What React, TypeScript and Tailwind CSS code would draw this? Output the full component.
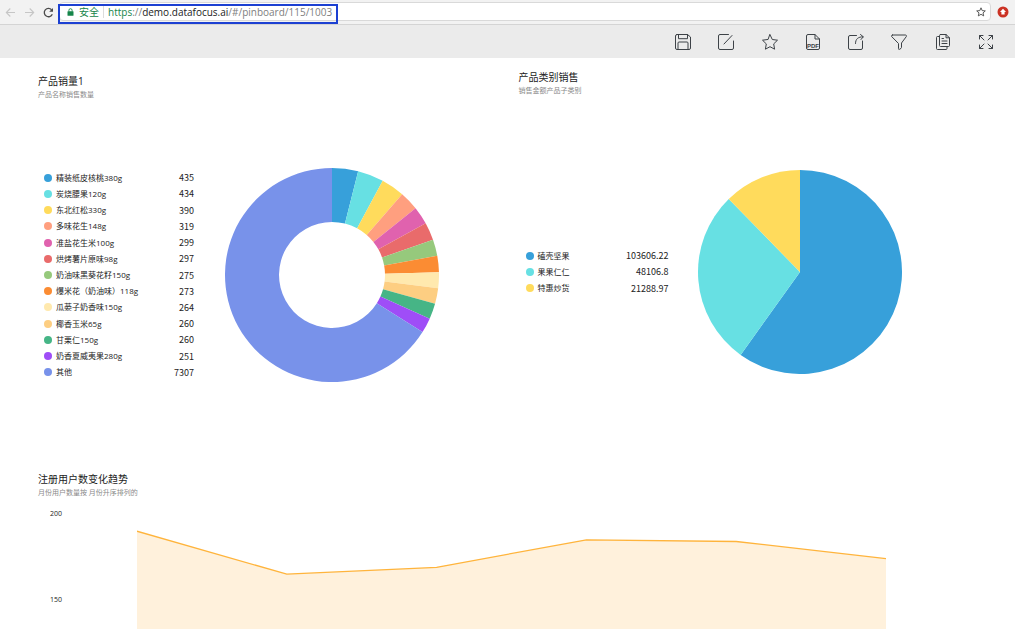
import type { ReactNode } from 'react';

interface Item {
  name: string;
  value: number;
  color: string;
}

const products: Item[] = [
  { name: '精装纸皮核桃380g', value: 435, color: '#37a0da' },
  { name: '炭烧腰果120g', value: 434, color: '#67e0e3' },
  { name: '东北红松330g', value: 390, color: '#ffdb5c' },
  { name: '多味花生148g', value: 319, color: '#ff9f7f' },
  { name: '淮盐花生米100g', value: 299, color: '#e062ae' },
  { name: '烘烤薯片原味98g', value: 297, color: '#e96b6b' },
  { name: '奶油味黑葵花籽150g', value: 275, color: '#96c97c' },
  { name: '爆米花（奶油味）118g', value: 273, color: '#fb8c33' },
  { name: '瓜蒌子奶香味150g', value: 264, color: '#ffe9ae' },
  { name: '椰香玉米65g', value: 260, color: '#fdce82' },
  { name: '甘栗仁150g', value: 260, color: '#46b586' },
  { name: '奶香夏威夷果280g', value: 251, color: '#9f4df7' },
  { name: '其他', value: 7307, color: '#7892ea' },
];

const categories: Item[] = [
  { name: '磕壳坚果', value: 103606.22, color: '#37a0da' },
  { name: '果果仁仁', value: 48106.8, color: '#67e0e3' },
  { name: '特惠炒货', value: 21288.97, color: '#ffdb5c' },
];

const monthlyUsers = [190, 165, 169, 185, 184, 174];

function slicePath(r: number, inner: number, from: number, to: number) {
  const at = (radius: number, turn: number) => {
    const a = turn * 2 * Math.PI;
    return `${(r + radius * Math.sin(a)).toFixed(2)} ${(r - radius * Math.cos(a)).toFixed(2)}`;
  };
  const large = to - from > 0.5 ? 1 : 0;
  return `M ${at(r, from)} A ${r} ${r} 0 ${large} 1 ${at(r, to)} L ${at(inner, to)} A ${inner} ${inner} 0 ${large} 0 ${at(inner, from)} Z`;
}

function Pie({ items, r, inner = 0, label }: { items: Item[]; r: number; inner?: number; label: string }) {
  const total = items.reduce((sum, item) => sum + item.value, 0);
  let start = 0;

  return (
    <svg width={r * 2} height={r * 2} viewBox={`0 0 ${r * 2} ${r * 2}`} className="shrink-0" role="img" aria-label={label}>
      {items.map((item) => {
        const from = start;
        start += item.value / total;
        return <path key={item.name} d={slicePath(r, inner, from, start)} fill={item.color} />;
      })}
    </svg>
  );
}

function Legend({ items, className }: { items: Item[]; className: string }) {
  return (
    <ul className={`flex flex-col shrink-0 text-[8px] leading-none text-[#222] ${className}`}>
      {items.map((item) => (
        <li key={item.name} className="flex flex-1 items-center">
          <span className="size-2 rounded-full mr-1" style={{ backgroundColor: item.color }} />
          <span className="whitespace-nowrap">{item.name}</span>
          <span className="ml-auto font-['Noto_Sans_CJK_SC',sans-serif] text-[9px] leading-none">{item.value}</span>
        </li>
      ))}
    </ul>
  );
}

function WidgetTitle({ title, subtitle }: { title: string; subtitle: string }) {
  return (
    <div className="flex flex-col gap-0.5">
      <h2 className="text-[10px] leading-[14px] text-[#222]">{title}</h2>
      <p className="text-[7px] leading-[10px] text-[#8a8a8a]">{subtitle}</p>
    </div>
  );
}

function TrendChart() {
  const step = 750 / (monthlyUsers.length - 1);
  const points = monthlyUsers.map((v, i) => `${i * step},${((200 - v) * 1.72).toFixed(1)}`).join(' ');

  return (
    <div className="flex pl-3 pr-[91px] mt-[11px]">
      <div className="flex flex-col gap-[76px] w-[87px] text-[7px] leading-[10px] text-[#222]">
        <span>200</span>
        <span>150</span>
      </div>
      <svg
        viewBox="0 0 750 115"
        preserveAspectRatio="none"
        className="flex-1 min-w-0 h-[115px] mt-[5px]"
        role="img"
        aria-label="注册用户数变化趋势"
      >
        <polygon points={`0,115 ${points} 750,115`} fill="#fff1dc" />
        <polyline points={points} fill="none" stroke="#ffb43c" strokeWidth="1.3" vectorEffect="non-scaling-stroke" />
      </svg>
    </div>
  );
}

function ToolButton({ label, children }: { label: string; children: ReactNode }) {
  return (
    <button aria-label={label} className="size-4">
      <svg
        viewBox="0 0 16 16"
        className="size-4"
        fill="none"
        stroke="#3d4247"
        strokeWidth="1"
        strokeLinecap="round"
        strokeLinejoin="round"
      >
        {children}
      </svg>
    </button>
  );
}

function Toolbar() {
  return (
    <div className="flex justify-end h-[33px] pr-[21px] bg-[#ebebeb]">
      <div className="flex items-center justify-between w-[319px]">
        <ToolButton label="保存">
          <path d="M2 .5h10.5l3 2.5v11a1.5 1.5 0 0 1-1.5 1.5H2A1.5 1.5 0 0 1 .5 14V2A1.5 1.5 0 0 1 2 .5Z" />
          <path d="M3.5.5v4.2h9V.5M3 15.5V9a1 1 0 0 1 1-1h8a1 1 0 0 1 1 1v6.5" />
        </ToolButton>
        <ToolButton label="编辑">
          <path d="M10.5.5H2A1.5 1.5 0 0 0 .5 2v12A1.5 1.5 0 0 0 2 15.5h12a1.5 1.5 0 0 0 1.5-1.5V7M6 10l8-8.5" />
        </ToolButton>
        <ToolButton label="收藏">
          <path d="M8 .7l2.3 4.8 5.2.7-3.8 3.7.9 5.3L8 12.7l-4.6 2.5.9-5.3L.5 6.2l5.2-.7Z" />
        </ToolButton>
        <ToolButton label="导出 PDF">
          <path d="M1.5 8V2A1.5 1.5 0 0 1 3 .5h7l4.500 4.500V14a1.500 1.500 0 0 1-1.500 1.500H3A1.500 1.500 0 0 1 1.500 14V8M10 .5V5h4.500" />
          <text
            x="8"
            y="13.5"
            textAnchor="middle"
            fill="#3d4247"
            stroke="none"
            className="font-['Liberation_Sans',sans-serif] text-[6px] font-bold"
          >
            PDF
          </text>
        </ToolButton>
        <ToolButton label="分享">
          <path d="M8.5 1.5H2A1.5 1.5 0 0 0 .5 3v11A1.5 1.5 0 0 0 2 15.5h11a1.5 1.5 0 0 0 1.5-1.5V7" />
          <path d="M7.5 9.5C7.5 5 10 2.8 15 2.8M12.5.5l2.8 2.3-2.3 2.7" />
        </ToolButton>
        <ToolButton label="筛选">
          <path d="M1.5 1h13a1 1 0 0 1 .8 1.6L10.5 9v4.5a1 1 0 0 1-.5.9l-1.5.9a.7.7 0 0 1-1-.6V9.5L.7 2.6A1 1 0 0 1 1.5 1Z" />
        </ToolButton>
        <ToolButton label="复制">
          <path d="M5.5.5H11l3.5 3.3V11.5a1 1 0 0 1-1 1h-8a1 1 0 0 1-1-1v-10a1 1 0 0 1 1-1Z" />
          <path d="M11 .5v3.3h3.5M7 4.5h1.5M7 7h5M7 9.5h5" />
          <path d="M4.5 2.5H2.5a1 1 0 0 0-1 1v11a1 1 0 0 0 1 1H11a1 1 0 0 0 1-1v-2" />
        </ToolButton>
        <ToolButton label="全屏">
          <path d="M5 1.5H1.5V5M1.5 1.5 6 6M11 1.5h3.5V5M14.5 1.5 10 6M5 14.5H1.5V11M1.5 14.5 6 10M11 14.5h3.5V11M14.5 14.5 10 10" />
        </ToolButton>
      </div>
    </div>
  );
}

function BrowserBar() {
  return (
    <div className="flex items-center h-[25px] pl-[5px] pr-[6px] bg-[#f2f2f2] border-b border-[#d4d4d4]">
      <div className="flex items-center gap-2">
        <button aria-label="后退">
          <svg viewBox="0 0 11 11" className="size-[11px]" fill="none" stroke="#c6c6c6" strokeWidth="1.1">
            <path d="M10 5.5H1.5M5.3 1.5l-4 4 4 4" />
          </svg>
        </button>
        <button aria-label="前进">
          <svg viewBox="0 0 11 11" className="size-[11px]" fill="none" stroke="#c6c6c6" strokeWidth="1.1">
            <path d="M1 5.5h8.5M5.7 1.5l4 4-4 4" />
          </svg>
        </button>
        <button aria-label="重新加载">
          <svg viewBox="0 0 11 11" className="size-[11px]" fill="none" stroke="#4a4a4a" strokeWidth="1.3">
            <path d="M9.3 7.3A4.2 4.2 0 1 1 8.6 2.7" />
            <path d="M10 1v3.8H6.2Z" fill="#4a4a4a" stroke="none" />
          </svg>
        </button>
      </div>

      <div className="relative flex flex-1 items-center h-[19px] ml-[5px] mr-[6px] mb-px pl-[7px] pr-1 bg-white border border-[#d9d9d9] rounded-sm text-[10px] leading-none">
        <div className="absolute -left-[2px] top-px w-[280px] h-5 border-2 border-[#1c40d2] pointer-events-none" />
        <svg viewBox="0 0 7 8" className="w-[7px] h-2 mr-[5px]" fill="#16854a">
          <rect x="0.5" y="3.3" width="6" height="4.5" rx="0.5" />
          <path d="M1.9 3.5V2.3a1.6 1.6 0 0 1 3.2 0v1.2" fill="none" stroke="#16854a" strokeWidth="0.9" />
        </svg>
        <span className="text-[#16854a]">安全</span>
        <span className="w-px h-3 mx-1 bg-[#dcdcdc]" />
        <a href="https://demo.datafocus.ai/#/pinboard/115/1003" className="text-[#808080] whitespace-nowrap">
          <span className="text-[#16854a]">https</span>://<span className="text-[#222]">demo.datafocus.ai</span>
          /#/pinboard/115/1003
        </a>
        <button aria-label="收藏此页" className="ml-auto">
          <svg viewBox="0 0 10 10" className="size-[10px]" fill="none" stroke="#4a4a4a" strokeWidth="0.9">
            <path d="M5 .8l1.2 2.8 3.1.3-2.3 2 .7 3L5 7.3 2.3 8.9l.7-3-2.3-2 3.1-.3Z" />
          </svg>
        </button>
      </div>

      <button aria-label="扩展程序">
        <svg viewBox="0 0 12 12" className="size-3">
          <circle cx="6" cy="6" r="5.5" fill="#cb3224" />
          <path d="M6 2.8 9 5.9H7.6V8.6H4.4V5.9H3Z" fill="#fff" />
        </svg>
      </button>
    </div>
  );
}

export default function App() {
  return (
    <div className="min-h-screen bg-white font-['Open_Sans','Noto_Sans_CJK_SC',sans-serif]">
      <BrowserBar />
      <Toolbar />

      <main className="px-[38px]">
        <div className="grid grid-cols-2 gap-[22px]">
          <section className="pt-4">
            <WidgetTitle title="产品销量1" subtitle="产品名称销售数量" />
            <div className="flex items-center gap-[31px] pl-[6px] mt-[68px]">
              <Legend items={products} className="w-[150px] h-[211px]" />
              <Pie items={products} r={107} inner={53} label="产品销量1" />
            </div>
          </section>

          <section className="pt-3">
            <WidgetTitle title="产品类别销售" subtitle="销售金额产品子类别" />
            <div className="flex items-center gap-[29px] pl-[7px] mt-[74px]">
              <Legend items={categories} className="w-[143px] h-[49px]" />
              <Pie items={categories} r={102} label="产品类别销售" />
            </div>
          </section>
        </div>

        <section className="mt-[90px]">
          <WidgetTitle title="注册用户数变化趋势" subtitle="月份用户数量按 月份升序排列的" />
          <TrendChart />
        </section>
      </main>
    </div>
  );
}
